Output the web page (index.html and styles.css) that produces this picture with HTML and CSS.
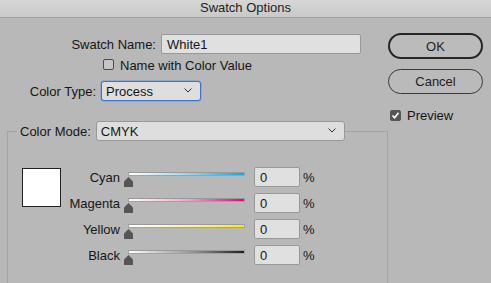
FILE: index.html
```html
<!DOCTYPE html>
<html>
<head>
<meta charset="utf-8">
<link rel="stylesheet" href="styles.css">
</head>
<body>
<div class="titlebar">Swatch Options</div>
<div class="dialog">
  <div class="main">
    <div class="row name-row">
      <span class="label name-label">Swatch Name:</span>
      <div class="field name-field">White1</div>
    </div>
    <div class="check-row">
      <span class="box"></span>
      <span class="check-text">Name with Color Value</span>
    </div>
    <div class="row type-row">
      <span class="label type-label">Color Type:</span>
      <div class="select type-select">
        <span>Process</span>
        <svg class="chev" width="8" height="5" viewBox="0 0 8 5"><polyline points="0.5,0.5 4,4 7.5,0.5" fill="none" stroke="#333" stroke-width="1"/></svg>
      </div>
    </div>
    <fieldset class="mode">
      <legend class="legend">
        <span class="label">Color Mode:</span>
        <div class="select mode-select">
          <span>CMYK</span>
          <svg class="chev" width="8" height="5" viewBox="0 0 8 5"><polyline points="0.5,0.5 4,4 7.5,0.5" fill="none" stroke="#333" stroke-width="1"/></svg>
        </div>
      </legend>
      <div class="mix">
        <div class="swatch"></div>

        <span class="ink-label r1">Cyan</span>
        <div class="slider r1"><div class="track cyan"></div><div class="thumb"></div></div>
        <div class="field num r1">0</div>
        <span class="pct r1">%</span>

        <span class="ink-label r2">Magenta</span>
        <div class="slider r2"><div class="track magenta"></div><div class="thumb"></div></div>
        <div class="field num r2">0</div>
        <span class="pct r2">%</span>

        <span class="ink-label r3">Yellow</span>
        <div class="slider r3"><div class="track yellow"></div><div class="thumb"></div></div>
        <div class="field num r3">0</div>
        <span class="pct r3">%</span>

        <span class="ink-label r4">Black</span>
        <div class="slider r4"><div class="track black"></div><div class="thumb"></div></div>
        <div class="field num r4">0</div>
        <span class="pct r4">%</span>
      </div>
    </fieldset>
  </div>
  <div class="side">
    <div class="btn ok">OK</div>
    <div class="btn cancel">Cancel</div>
    <div class="preview">
      <span class="box checked">
        <svg width="9" height="9" viewBox="0 0 9 9"><polyline points="1.5,4.5 3.6,6.8 7.5,1.8" fill="none" stroke="#fff" stroke-width="1.6"/></svg>
      </span>
      <span>Preview</span>
    </div>
  </div>
</div>
</body>
</html>
```
FILE: styles.css
```css
* { box-sizing: border-box; }
html, body {
  margin: 0;
  padding: 0;
}
body {
  width: 491px;
  height: 283px;
  overflow: hidden;
  background: #b8b8b8;
  font-family: "Liberation Sans", Arial, sans-serif;
  font-size: 13px;
  color: #161616;
}
.titlebar {
  height: 18px;
  line-height: 16px;
  text-align: center;
  background: linear-gradient(#d6d6d6, #c9c9c9);
  border-bottom: 1px solid #a2a2a2;
  font-size: 13px;
  color: #222;
}
.dialog {
  display: flex;
}
.main {
  width: 388px;
  display: flex;
  flex-direction: column;
}
.row {
  display: flex;
  align-items: flex-start;
  gap: 5px;
}
.label {
  line-height: 18px;
  padding-top: 2px;
  white-space: nowrap;
}
.name-row { margin-top: 16px; }
.name-label { width: 156px; text-align: right; }
.field {
  height: 20px;
  background: #e0e0e0;
  border: 1px solid #989898;
  border-radius: 2px;
  padding: 2px 0 0 5px;
  line-height: 16px;
}
.name-field { width: 200px; }
.check-row {
  margin-top: 5px;
  padding-left: 103px;
  display: flex;
  align-items: center;
  gap: 6px;
  height: 11px;
  line-height: 11px;
}
.box {
  width: 11px;
  height: 11px;
  border: 1px solid #4c4c4c;
  border-radius: 2px;
  background: #c6c6c6;
  flex: none;
}
.check-text { padding-top: 1px; }
.type-row { margin-top: 11px; }
.type-label { width: 96px; text-align: right; }
.select {
  height: 20px;
  background: #dedede;
  border: 1px solid #989898;
  border-radius: 3px;
  display: flex;
  align-items: center;
  justify-content: space-between;
  padding: 1px 8px 0 4px;
}
.type-select {
  width: 100px;
  border-color: #3f72cc;
  box-shadow: 0 0 0 0.5px #6f96d8;
}
.chev { flex: none; margin-top: -2px; }
.mode {
  margin: 20px 0 0 7px;
  width: 381px;
  min-width: 0;
  border: 1px solid #a3a3a3;
  border-bottom: none;
  padding: 0 0 20px 9px;
}
.legend {
  display: flex;
  align-items: flex-start;
  gap: 5px;
  padding: 0 0 0 3px;
}
.mode-select { width: 249px; }
.mix {
  padding: 26px 0 0 5px;
  display: grid;
  grid-template-columns: 39px 59px 134px 46px auto;
  grid-auto-rows: 20px;
  row-gap: 6px;
}
.swatch {
  grid-column: 1;
  grid-row: 1 / span 2;
  margin-top: 1px;
  width: 39px;
  height: 39px;
  background: #fff;
  border: 1px solid #222;
}
.r1 { grid-row: 1; }
.r2 { grid-row: 2; }
.r3 { grid-row: 3; }
.r4 { grid-row: 4; }
.ink-label {
  grid-column: 2;
  text-align: right;
  line-height: 18px;
  padding-top: 2px;
}
.slider {
  grid-column: 3;
  padding-left: 4px;
  display: flex;
  flex-direction: column;
}
.track {
  margin: 5px 0 0 4px;
  width: 117px;
  height: 4px;
  border: 1px solid #a2a2a2;
  border-top-color: #9a9a9a;
}
.cyan { background: linear-gradient(to right, #ffffff, #9ad6f3 50%, #00aeef); }
.magenta { background: linear-gradient(to right, #ffffff, #f3a7cb 50%, #e5007e); }
.yellow { background: linear-gradient(to right, #ffffff, #fff5a0 50%, #ffec00); }
.black { background: linear-gradient(to right, #ffffff, #8a8a8a 60%, #1e1e1e); }
.thumb {
  margin-top: 1px;
  width: 9px;
  height: 10px;
  background: #555;
  clip-path: polygon(50% 0, 100% 45%, 100% 100%, 0 100%, 0 45%);
}
.num {
  grid-column: 4;
  width: 46px;
}
.pct {
  grid-column: 5;
  padding: 2px 0 0 3px;
  line-height: 18px;
}
.side {
  width: 95px;
  display: flex;
  flex-direction: column;
}
.btn {
  width: 95px;
  display: flex;
  align-items: center;
  justify-content: center;
  color: #1e1e1e;
}
.ok {
  margin-top: 15px;
  height: 26px;
  border: 2px solid #262626;
  border-radius: 13px;
  background: #bbbbbb;
}
.cancel {
  margin-top: 10px;
  height: 25px;
  border: 1px solid #3a3a3a;
  border-radius: 13px;
  background: #bababa;
}
.preview {
  margin-top: 15px;
  padding-left: 2px;
  display: flex;
  align-items: center;
  gap: 6px;
  height: 12px;
}
.box.checked {
  width: 11px;
  height: 11px;
  background: #555;
  border-color: #555;
  display: flex;
  align-items: center;
  justify-content: center;
}
```
